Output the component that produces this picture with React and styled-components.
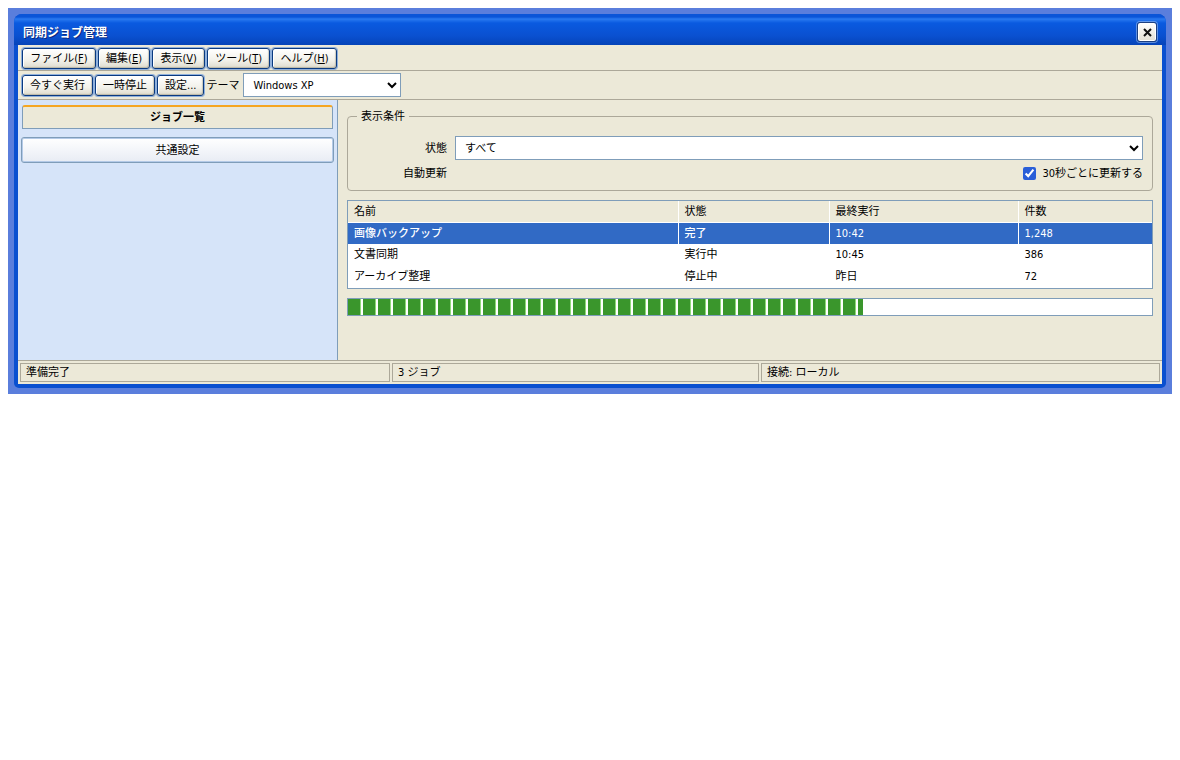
import React from "react";
import styled, { createGlobalStyle } from "styled-components";

const GlobalStyle = createGlobalStyle`
  body {
    margin: 8px;
    background: #fff;
    font-family: "DejaVu Sans Condensed", "Noto Sans CJK JP", sans-serif;
    font-size: 11px;
    line-height: 15px;
    color: #000;
  }
`;

const Desktop = styled.div`
  background: #5a7edc;
  padding: 6px;
`;

const Win = styled.div`
  border-radius: 8px 8px 5px 5px;
  background: #0a50d0;
  padding: 0 4px 4px;
`;

const TitleBar = styled.div`
  height: 31px;
  box-sizing: border-box;
  margin: 0 -4px;
  padding: 5px 9px 0 9px;
  border-radius: 8px 8px 0 0;
  display: flex;
  align-items: center;
  justify-content: space-between;
  background: linear-gradient(to bottom, #0a55d8 0, #0a55d8 3px, #2a7af0 5px, #0a5ae0 9px, #0a50d0 22px, #0544b8 100%);
`;

const Title = styled.span`
  color: #fff;
  font-weight: 700;
  font-size: 12px;
  padding-top: 2px;
  text-shadow: 1px 1px 0 #0a2a80;
`;

const CloseBtn = styled.button`
  width: 20px;
  height: 20px;
  padding: 0;
  display: flex;
  align-items: center;
  justify-content: center;
  border: 1px solid #1c3f80;
  border-radius: 3px;
  background: linear-gradient(to bottom, #fff, #e4e0d4);
  box-shadow: inset 0 0 0 1px #fff, 0 0 0 1px rgba(150, 185, 235, 0.6);
  color: #000;
`;

const Body = styled.div`
  background: #ece9d8;
`;

const Bar = styled.div`
  display: flex;
  align-items: center;
  gap: 2px;
  padding: ${(p) => p.$top || 0}px 4px 0;
  border-bottom: 1px solid #aca899;
  height: ${(p) => p.$h}px;
  box-sizing: border-box;
`;

const Btn = styled.button`
  height: 21px;
  padding: 0 ${(p) => p.$pad || 7}px;
  font: inherit;
  color: #000;
  border: 1px solid #0a3a80;
  border-radius: 3px;
  background: linear-gradient(to bottom, #fff, #f2f1ea 60%, #dedbcd);
  box-shadow: inset -1px -1px 1px rgba(120, 115, 95, 0.35), inset 1px 1px 0 #fff, 0 0 0 1px #8fb0dc;
  white-space: nowrap;
  u { text-decoration: underline; }
`;

const Label = styled.span`
  white-space: nowrap;
  margin-right: 2px;
`;

const Select = styled.select`
  font: inherit;
  color: #000;
  background: #fff;
  border: 1px solid #7f9db9;
  border-radius: 0;
  padding: 0 5px;
  height: 24px;
  width: ${(p) => p.$w || "100%"};
  box-sizing: border-box;
`;

const Split = styled.div`
  display: flex;
  height: 260px;
`;

const Side = styled.div`
  width: 320px;
  box-sizing: border-box;
  background: #d6e4f9;
  border-right: 1px solid #7f9db9;
  padding: 5px 4px;
  display: flex;
  flex-direction: column;
  gap: 8px;
`;

const SideHead = styled.div`
  height: 24px;
  box-sizing: border-box;
  display: flex;
  align-items: center;
  justify-content: center;
  font-weight: 700;
  background: #ece9d8;
  border: 1px solid #7f9db9;
  border-top: 2px solid #f5a623;
  border-radius: 3px 3px 0 0;
`;

const SideBtn = styled.button`
  height: 26px;
  margin: 0 -1px;
  font: inherit;
  color: #000;
  border: 1px solid #7f9db9;
  border-radius: 3px;
  background: linear-gradient(to bottom, #fff, #e8ecf4);
  box-shadow: inset 0 0 0 1px #b4cae8;
`;

const Main = styled.div`
  flex: 1;
  padding: 8px 9px 0 9px;
  display: flex;
  flex-direction: column;
`;

const Group = styled.fieldset`
  margin: 0 0 9px;
  padding: 12px 9px 4px;
  height: 83px;
  box-sizing: border-box;
  border: 1px solid #aca899;
  border-radius: 4px;
  legend {
    padding: 1px 4px 0;
    line-height: 15px;
  }
`;

const FormGrid = styled.div`
  display: grid;
  grid-template-columns: 90px 1fr;
  column-gap: 8px;
  row-gap: 6px;
  align-items: center;
`;

const RightLabel = styled.label`
  text-align: right;
`;

const CheckRow = styled.label`
  display: flex;
  justify-content: flex-end;
  align-items: center;
  gap: 6px;
  input {
    margin: 0;
    width: 13px;
    height: 13px;
    accent-color: #2a5fd8;
  }
`;

const TableWrap = styled.div`
  border: 1px solid #7f9db9;
  background: #fff;
  margin-bottom: 9px;
`;

const Table = styled.table`
  width: 100%;
  table-layout: fixed;
  border-collapse: collapse;
`;

const Th = styled.th`
  height: 21px;
  padding: 0 6px;
  font-weight: 400;
  text-align: left;
  background: #ece9d8;
  border-right: 1px solid #fff;
  border-bottom: 1px solid #fff;
  &:last-child { border-right: 0; }
`;

const Td = styled.td`
  height: 20.67px;
  padding: 0 6px;
  background: ${(p) => (p.$sel ? "#316ac5" : "#fff")};
  color: ${(p) => (p.$sel ? "#fff" : "#000")};
  font-weight: ${(p) => (p.$sel ? 500 : 400)};
  border-right: 1px solid #fff;
  border-bottom: 1px solid #fff;
  &:last-child { border-right: 0; }
`;

const Progress = styled.div`
  height: 18px;
  box-sizing: border-box;
  border: 1px solid #7f9db9;
  background: #fff;
`;

const ProgressFill = styled.div`
  height: 100%;
  background: repeating-linear-gradient(
    to right,
    #3a962c 0,
    #3a962c 12px,
    #8fd878 12px,
    #8fd878 13px,
    #fff 13px,
    #fff 15px
  );
`;

const Status = styled.div`
  height: 24px;
  box-sizing: border-box;
  border-top: 1px solid #aca899;
  padding: 2px;
  display: grid;
  grid-template-columns: 370px 367px 1fr;
  gap: 2px;
`;

const StatusCell = styled.div`
  border: 1px solid #aca899;
  padding: 0 5px;
  display: flex;
  align-items: center;
`;

const menus = [
  ["ファイル", "F"],
  ["編集", "E"],
  ["表示", "V"],
  ["ツール", "T"],
  ["ヘルプ", "H"],
];

const columns = [
  { name: "名前", width: 330 },
  { name: "状態", width: 151 },
  { name: "最終実行", width: 189 },
  { name: "件数" },
];

const rows = [
  ["画像バックアップ", "完了", "10:42", "1,248"],
  ["文書同期", "実行中", "10:45", "386"],
  ["アーカイブ整理", "停止中", "昨日", "72"],
];

export default function App() {
  return (
    <>
      <GlobalStyle />
      <Desktop>
        <Win>
          <TitleBar>
            <Title>同期ジョブ管理</Title>
            <CloseBtn aria-label="閉じる">
              <svg width="9" height="9" viewBox="0 0 9 9">
                <path d="M1 1l7 7M8 1L1 8" stroke="#111" strokeWidth="2" />
              </svg>
            </CloseBtn>
          </TitleBar>
          <Body>
            <Bar $h={26} $top={1}>
              {menus.map(([name, key]) => (
                <Btn key={key} $pad={7.2}>
                  {name}(<u>{key}</u>)
                </Btn>
              ))}
            </Bar>
            <Bar $h={29}>
              <Btn>今すぐ実行</Btn>
              <Btn>一時停止</Btn>
              <Btn>設定...</Btn>
              <Label>テーマ</Label>
              <Select $w="158px" defaultValue="xp">
                <option value="xp">Windows XP</option>
              </Select>
            </Bar>
            <Split>
              <Side>
                <SideHead>ジョブ一覧</SideHead>
                <SideBtn>共通設定</SideBtn>
              </Side>
              <Main>
                <Group>
                  <legend>表示条件</legend>
                  <FormGrid>
                    <RightLabel>状態</RightLabel>
                    <Select defaultValue="all">
                      <option value="all">すべて</option>
                    </Select>
                    <RightLabel>自動更新</RightLabel>
                    <CheckRow>
                      <input type="checkbox" defaultChecked />
                      30秒ごとに更新する
                    </CheckRow>
                  </FormGrid>
                </Group>
                <TableWrap>
                  <Table>
                    <colgroup>
                      {columns.map((c) => (
                        <col key={c.name} style={c.width ? { width: c.width } : undefined} />
                      ))}
                    </colgroup>
                    <thead>
                      <tr>
                        {columns.map((c) => (
                          <Th key={c.name}>{c.name}</Th>
                        ))}
                      </tr>
                    </thead>
                    <tbody>
                      {rows.map((row, i) => (
                        <tr key={row[0]}>
                          {row.map((cell) => (
                            <Td key={cell} $sel={i === 0}>
                              {cell}
                            </Td>
                          ))}
                        </tr>
                      ))}
                    </tbody>
                  </Table>
                </TableWrap>
                <Progress>
                  <ProgressFill style={{ width: "64%" }} />
                </Progress>
              </Main>
            </Split>
            <Status>
              <StatusCell>準備完了</StatusCell>
              <StatusCell>3 ジョブ</StatusCell>
              <StatusCell>接続: ローカル</StatusCell>
            </Status>
          </Body>
        </Win>
      </Desktop>
    </>
  );
}
